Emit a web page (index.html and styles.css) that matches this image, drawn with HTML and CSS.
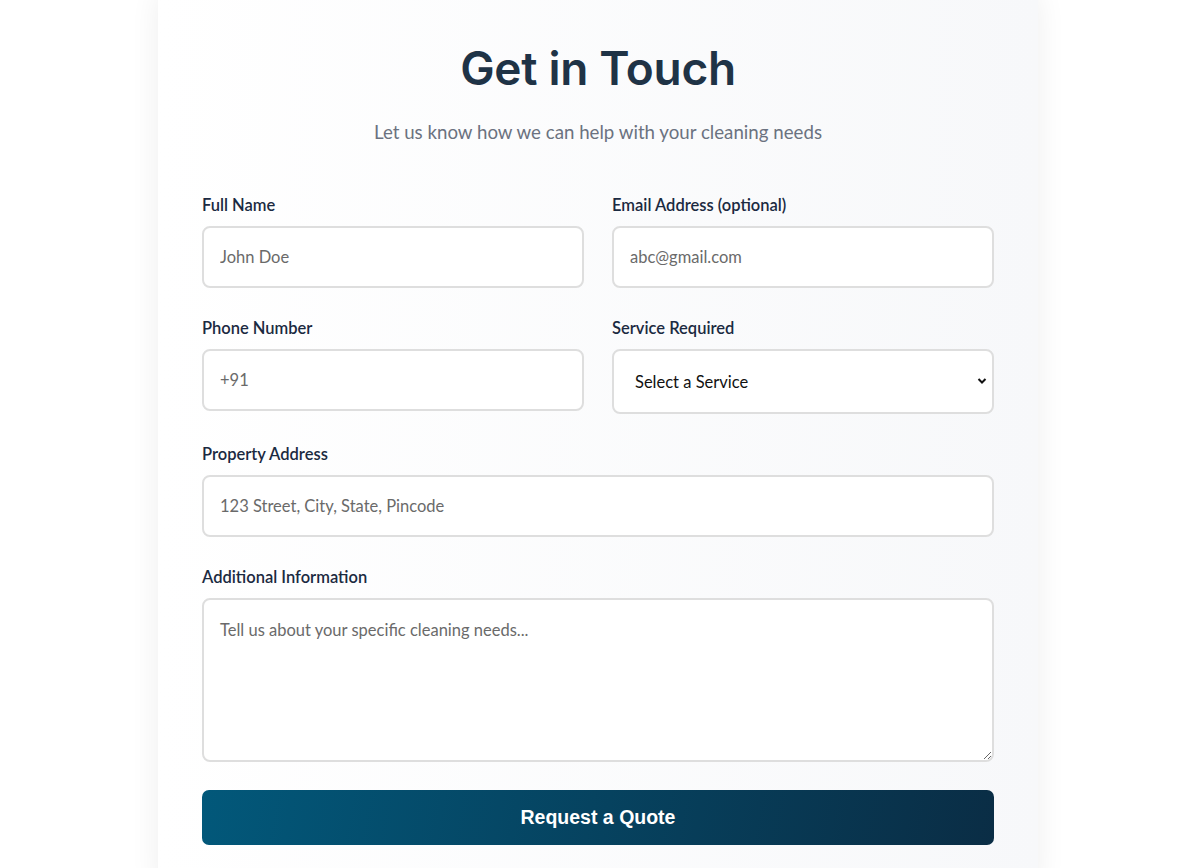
FILE: index.html
```html
<!DOCTYPE html>
<html lang="en">
<head>
<meta charset="utf-8">
<title>Get in Touch</title>
<link rel="stylesheet" href="styles.css">
</head>
<body>
<div class="page">
  <section class="card">
    <h1 class="title">Get in Touch</h1>
    <p class="subtitle">Let us know how we can help with your cleaning needs</p>
    <form class="form">
      <div class="row">
        <div class="field">
          <label class="label">Full Name</label>
          <input class="input" type="text" placeholder="John Doe">
        </div>
        <div class="field">
          <label class="label">Email Address (optional)</label>
          <input class="input" type="email" placeholder="abc@gmail.com">
        </div>
      </div>
      <div class="row">
        <div class="field">
          <label class="label">Phone Number</label>
          <input class="input" type="tel" placeholder="+91">
        </div>
        <div class="field">
          <label class="label">Service Required</label>
          <div class="select-wrap">
            <select class="select">
              <option>Select a Service</option>
            </select>
            <svg class="chev" width="10" height="8" viewBox="0 0 10 8"><path d="M1.5 2 L5 5.5 L8.5 2" fill="none" stroke="#111" stroke-width="2"/></svg>
          </div>
        </div>
      </div>
      <div class="field">
        <label class="label">Property Address</label>
        <input class="input" type="text" placeholder="123 Street, City, State, Pincode">
      </div>
      <div class="field">
        <label class="label">Additional Information</label>
        <textarea class="textarea" placeholder="Tell us about your specific cleaning needs..."></textarea>
      </div>
      <button class="btn" type="button">Request a Quote</button>
    </form>
  </section>
</div>
</body>
</html>
```

FILE: styles.css
```css
* { box-sizing: border-box; }
html, body { margin: 0; padding: 0; background: #ffffff; }
body { font-family: Lato, "Open Sans", sans-serif; overflow: hidden; }
.page { display: flex; justify-content: center; padding-left: 10px; }
.card {
  width: 880px;
  margin-top: -16px;
  padding: 58px 44px 40px;
  border-radius: 16px;
  background: linear-gradient(90deg, #ffffff 0%, #f7f8fa 100%);
  box-shadow: 0 6px 30px rgba(0, 0, 0, 0.07);
}
.title {
  margin: 0;
  text-align: center;
  font-family: Inter, "Noto Sans", sans-serif;
  font-weight: 600;
  font-size: 46px;
  line-height: 53px;
  color: #1f3346;
  letter-spacing: -0.3px;
}
.subtitle {
  margin: 24px 0 47px;
  text-align: center;
  font-size: 18.7px;
  line-height: 27px;
  color: #6b7280;
}
.form { display: flex; flex-direction: column; gap: 28px; }
.row { display: grid; grid-template-columns: 1fr 1fr; gap: 28px; }
.field { display: flex; flex-direction: column; }
.label {
  font-size: 16.5px;
  line-height: 24px;
  font-weight: 600;
  color: #1b2a41;
  margin-bottom: 9px;
}
.input, .select, .textarea {
  width: 100%;
  border: 2px solid #dedede;
  border-radius: 8px;
  background: #fff;
  font-family: Lato, "Open Sans", sans-serif;
  font-size: 16.5px;
  color: #333;
  outline: none;
}
.input { height: 62px; padding: 0 16px; }
.input::placeholder, .textarea::placeholder { color: #6a6a6a; }
.select-wrap { position: relative; }
.select {
  height: 65px;
  padding: 0 21px;
  appearance: none;
  -webkit-appearance: none;
  color: #111;
}
.chev { position: absolute; right: 7px; top: 28px; }
.textarea { height: 164px; padding: 18px 16px; resize: vertical; line-height: 24px; }
.btn {
  height: 55px;
  border: none;
  border-radius: 7px;
  background: linear-gradient(100deg, #02587a 0%, #0a2d45 100%);
  color: #fff;
  font-family: "Liberation Sans", Arial, sans-serif;
  font-weight: 700;
  font-size: 19.5px;
}
```
